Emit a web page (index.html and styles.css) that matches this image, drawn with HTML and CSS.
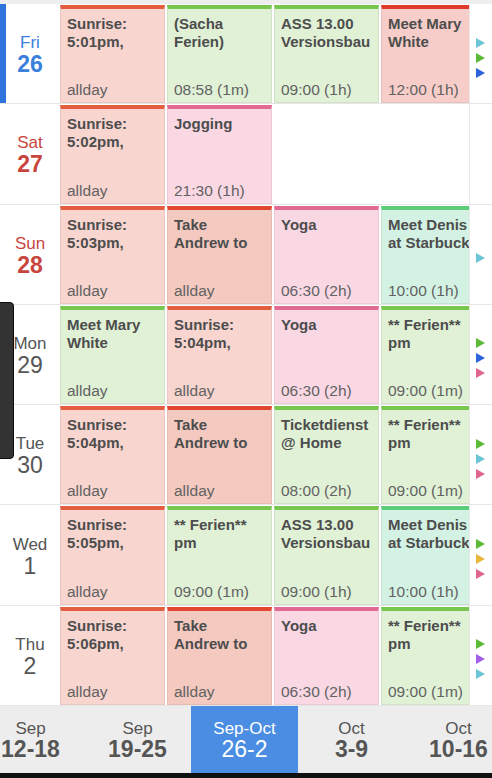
FILE: index.html
```html
<!DOCTYPE html>
<html>
<head>
<meta charset="utf-8">
<link rel="stylesheet" href="styles.css">
</head>
<body>
<div class="app">
  <div class="topstrip"></div>
  <div class="list">
    <div class="row">
      <div class="day today"><span class="dname">Fri</span><span class="dnum">26</span></div>
      <div class="cards">
        <div class="card red"><div class="title">Sunrise:<br>5:01pm,</div><div class="time">allday</div></div>
        <div class="card green"><div class="title">(Sacha<br>Ferien)</div><div class="time">08:58 (1m)</div></div>
        <div class="card green"><div class="title">ASS 13.00<br>Versionsbau</div><div class="time">09:00 (1h)</div></div>
        <div class="card crimson"><div class="title">Meet Mary<br>White</div><div class="time">12:00 (1h)</div></div>
      </div>
      <div class="more"><i class="tri cyan"></i><i class="tri lime"></i><i class="tri blue"></i></div>
    </div>
    <div class="row">
      <div class="day weekend"><span class="dname">Sat</span><span class="dnum">27</span></div>
      <div class="cards">
        <div class="card red"><div class="title">Sunrise:<br>5:02pm,</div><div class="time">allday</div></div>
        <div class="card pink"><div class="title">Jogging</div><div class="time">21:30 (1h)</div></div>
      </div>
      <div class="more"></div>
    </div>
    <div class="row">
      <div class="day weekend"><span class="dname">Sun</span><span class="dnum">28</span></div>
      <div class="cards">
        <div class="card red"><div class="title">Sunrise:<br>5:03pm,</div><div class="time">allday</div></div>
        <div class="card salmon"><div class="title">Take<br>Andrew to</div><div class="time">allday</div></div>
        <div class="card pink"><div class="title">Yoga</div><div class="time">06:30 (2h)</div></div>
        <div class="card teal"><div class="title">Meet Denis<br>at Starbucks</div><div class="time">10:00 (1h)</div></div>
      </div>
      <div class="more"><i class="tri cyan"></i></div>
    </div>
    <div class="row">
      <div class="day plain"><span class="dname">Mon</span><span class="dnum">29</span></div>
      <div class="cards">
        <div class="card green"><div class="title">Meet Mary<br>White</div><div class="time">allday</div></div>
        <div class="card red"><div class="title">Sunrise:<br>5:04pm,</div><div class="time">allday</div></div>
        <div class="card pink"><div class="title">Yoga</div><div class="time">06:30 (2h)</div></div>
        <div class="card green"><div class="title">** Ferien**<br>pm</div><div class="time">09:00 (1m)</div></div>
      </div>
      <div class="more"><i class="tri lime"></i><i class="tri blue"></i><i class="tri rose"></i></div>
    </div>
    <div class="row">
      <div class="day plain"><span class="dname">Tue</span><span class="dnum">30</span></div>
      <div class="cards">
        <div class="card red"><div class="title">Sunrise:<br>5:04pm,</div><div class="time">allday</div></div>
        <div class="card salmon"><div class="title">Take<br>Andrew to</div><div class="time">allday</div></div>
        <div class="card green"><div class="title">Ticketdienst<br>@ Home</div><div class="time">08:00 (2h)</div></div>
        <div class="card green"><div class="title">** Ferien**<br>pm</div><div class="time">09:00 (1m)</div></div>
      </div>
      <div class="more"><i class="tri lime"></i><i class="tri cyan"></i><i class="tri rose"></i></div>
    </div>
    <div class="row">
      <div class="day plain"><span class="dname">Wed</span><span class="dnum">1</span></div>
      <div class="cards">
        <div class="card red"><div class="title">Sunrise:<br>5:05pm,</div><div class="time">allday</div></div>
        <div class="card green"><div class="title">** Ferien**<br>pm</div><div class="time">09:00 (1m)</div></div>
        <div class="card green"><div class="title">ASS 13.00<br>Versionsbau</div><div class="time">09:00 (1h)</div></div>
        <div class="card teal"><div class="title">Meet Denis<br>at Starbucks</div><div class="time">10:00 (1h)</div></div>
      </div>
      <div class="more"><i class="tri lime"></i><i class="tri yellow"></i><i class="tri rose"></i></div>
    </div>
    <div class="row">
      <div class="day plain"><span class="dname">Thu</span><span class="dnum">2</span></div>
      <div class="cards">
        <div class="card red"><div class="title">Sunrise:<br>5:06pm,</div><div class="time">allday</div></div>
        <div class="card salmon"><div class="title">Take<br>Andrew to</div><div class="time">allday</div></div>
        <div class="card pink"><div class="title">Yoga</div><div class="time">06:30 (2h)</div></div>
        <div class="card green"><div class="title">** Ferien**<br>pm</div><div class="time">09:00 (1m)</div></div>
      </div>
      <div class="more"><i class="tri lime"></i><i class="tri purple"></i><i class="tri cyan"></i></div>
    </div>
  </div>
  <div class="nav">
    <div class="track">
      <div class="tab"><span class="tmonth">Sep</span><span class="trange">12-18</span></div>
      <div class="tab"><span class="tmonth">Sep</span><span class="trange">19-25</span></div>
      <div class="tab active"><span class="tmonth">Sep-Oct</span><span class="trange">26-2</span></div>
      <div class="tab"><span class="tmonth">Oct</span><span class="trange">3-9</span></div>
      <div class="tab"><span class="tmonth">Oct</span><span class="trange">10-16</span></div>
    </div>
  </div>
  <div class="bottombar"></div>
  <div class="handle"></div>
</div>
</body>
</html>
```
FILE: styles.css
```css
html, body {
  margin: 0;
  padding: 0;
}
body {
  width: 492px;
  height: 778px;
  overflow: hidden;
  font-family: "Liberation Sans", Arial, sans-serif;
  background: #fff;
}
.app {
  position: relative;
  display: flex;
  flex-direction: column;
  height: 778px;
}
.topstrip {
  height: 4px;
  background: #eeeeee;
  flex: none;
}
.list {
  flex: 1;
  display: flex;
  flex-direction: column;
  min-height: 0;
}
.row {
  flex: 1;
  min-height: 0;
  display: flex;
  border-bottom: 1px solid #e6e6e6;
  background: #fff;
}
.day {
  width: 60px;
  flex: none;
  display: flex;
  flex-direction: column;
  align-items: center;
  justify-content: center;
  padding-top: 2px;
  color: #555;
}
.day.today {
  box-shadow: inset 6px 0 0 #2f74dc;
  color: #3b80dc;
}
.day.weekend {
  color: #c8453d;
}
.dname {
  font-size: 17px;
  line-height: 19px;
}
.dnum {
  font-size: 23px;
  line-height: 24px;
  font-weight: bold;
}
.day.plain .dnum {
  font-weight: normal;
}
.cards {
  flex: 1;
  min-width: 0;
  display: flex;
  gap: 2px;
  padding-top: 1px;
  overflow: hidden;
  border-right: 1px solid #e8e8e8;
}
.card {
  width: 105px;
  flex: none;
  box-sizing: border-box;
  display: flex;
  flex-direction: column;
  justify-content: space-between;
  border: 1px solid rgba(0, 0, 0, 0.06);
  border-top: 4px solid #e35d3e;
  padding: 6px 0 3px 6px;
  overflow: hidden;
  white-space: nowrap;
}
.title {
  font-size: 15px;
  line-height: 18px;
  font-weight: bold;
  color: #4d4d4d;
}
.time {
  font-size: 15.5px;
  line-height: 18px;
  color: #626262;
}
.card.red {
  background: #f8d5cf;
  border-top-color: #e35d3e;
}
.card.crimson {
  background: #f6cdc8;
  border-top-color: #e03a2a;
}
.card.salmon {
  background: #f4c9c0;
  border-top-color: #e3452f;
}
.card.green {
  background: #e0f1d6;
  border-top-color: #77c74f;
}
.card.pink {
  background: #f9d8e4;
  border-top-color: #e06a93;
}
.card.teal {
  background: #d3f2e3;
  border-top-color: #5ccb7a;
}
.more {
  width: 22px;
  flex: none;
  display: flex;
  flex-direction: column;
  justify-content: center;
  gap: 5px;
  padding-left: 6px;
  padding-top: 8px;
  box-sizing: border-box;
}
.tri {
  display: block;
  width: 0;
  height: 0;
  border-left: 9px solid #5dbb3a;
  border-top: 5px solid transparent;
  border-bottom: 5px solid transparent;
}
.tri.cyan { border-left-color: #6cc4d6; }
.tri.lime { border-left-color: #5cba38; }
.tri.blue { border-left-color: #2c62da; }
.tri.rose { border-left-color: #e0668f; }
.tri.yellow { border-left-color: #e8b73c; }
.tri.purple { border-left-color: #a35fea; }
.nav {
  height: 67px;
  flex: none;
  background: #ededed;
  overflow: hidden;
}
.track {
  display: flex;
  height: 100%;
  margin-left: -23px;
}
.tab {
  width: 107px;
  flex: none;
  display: flex;
  flex-direction: column;
  align-items: center;
  justify-content: center;
  color: #555;
  padding-top: 1px;
}
.tab.active {
  background: #4a8de3;
  color: #fff;
}
.tmonth {
  font-size: 17px;
  line-height: 18px;
}
.trange {
  font-size: 23px;
  line-height: 23px;
  font-weight: bold;
}
.tab.active .trange {
  font-weight: normal;
}
.bottombar {
  height: 5px;
  flex: none;
  background: #111;
}
.handle {
  position: absolute;
  left: -6px;
  top: 302px;
  width: 18px;
  height: 155px;
  background: #333;
  border: 1px solid #0c0c0c;
  border-radius: 4px;
}
```
